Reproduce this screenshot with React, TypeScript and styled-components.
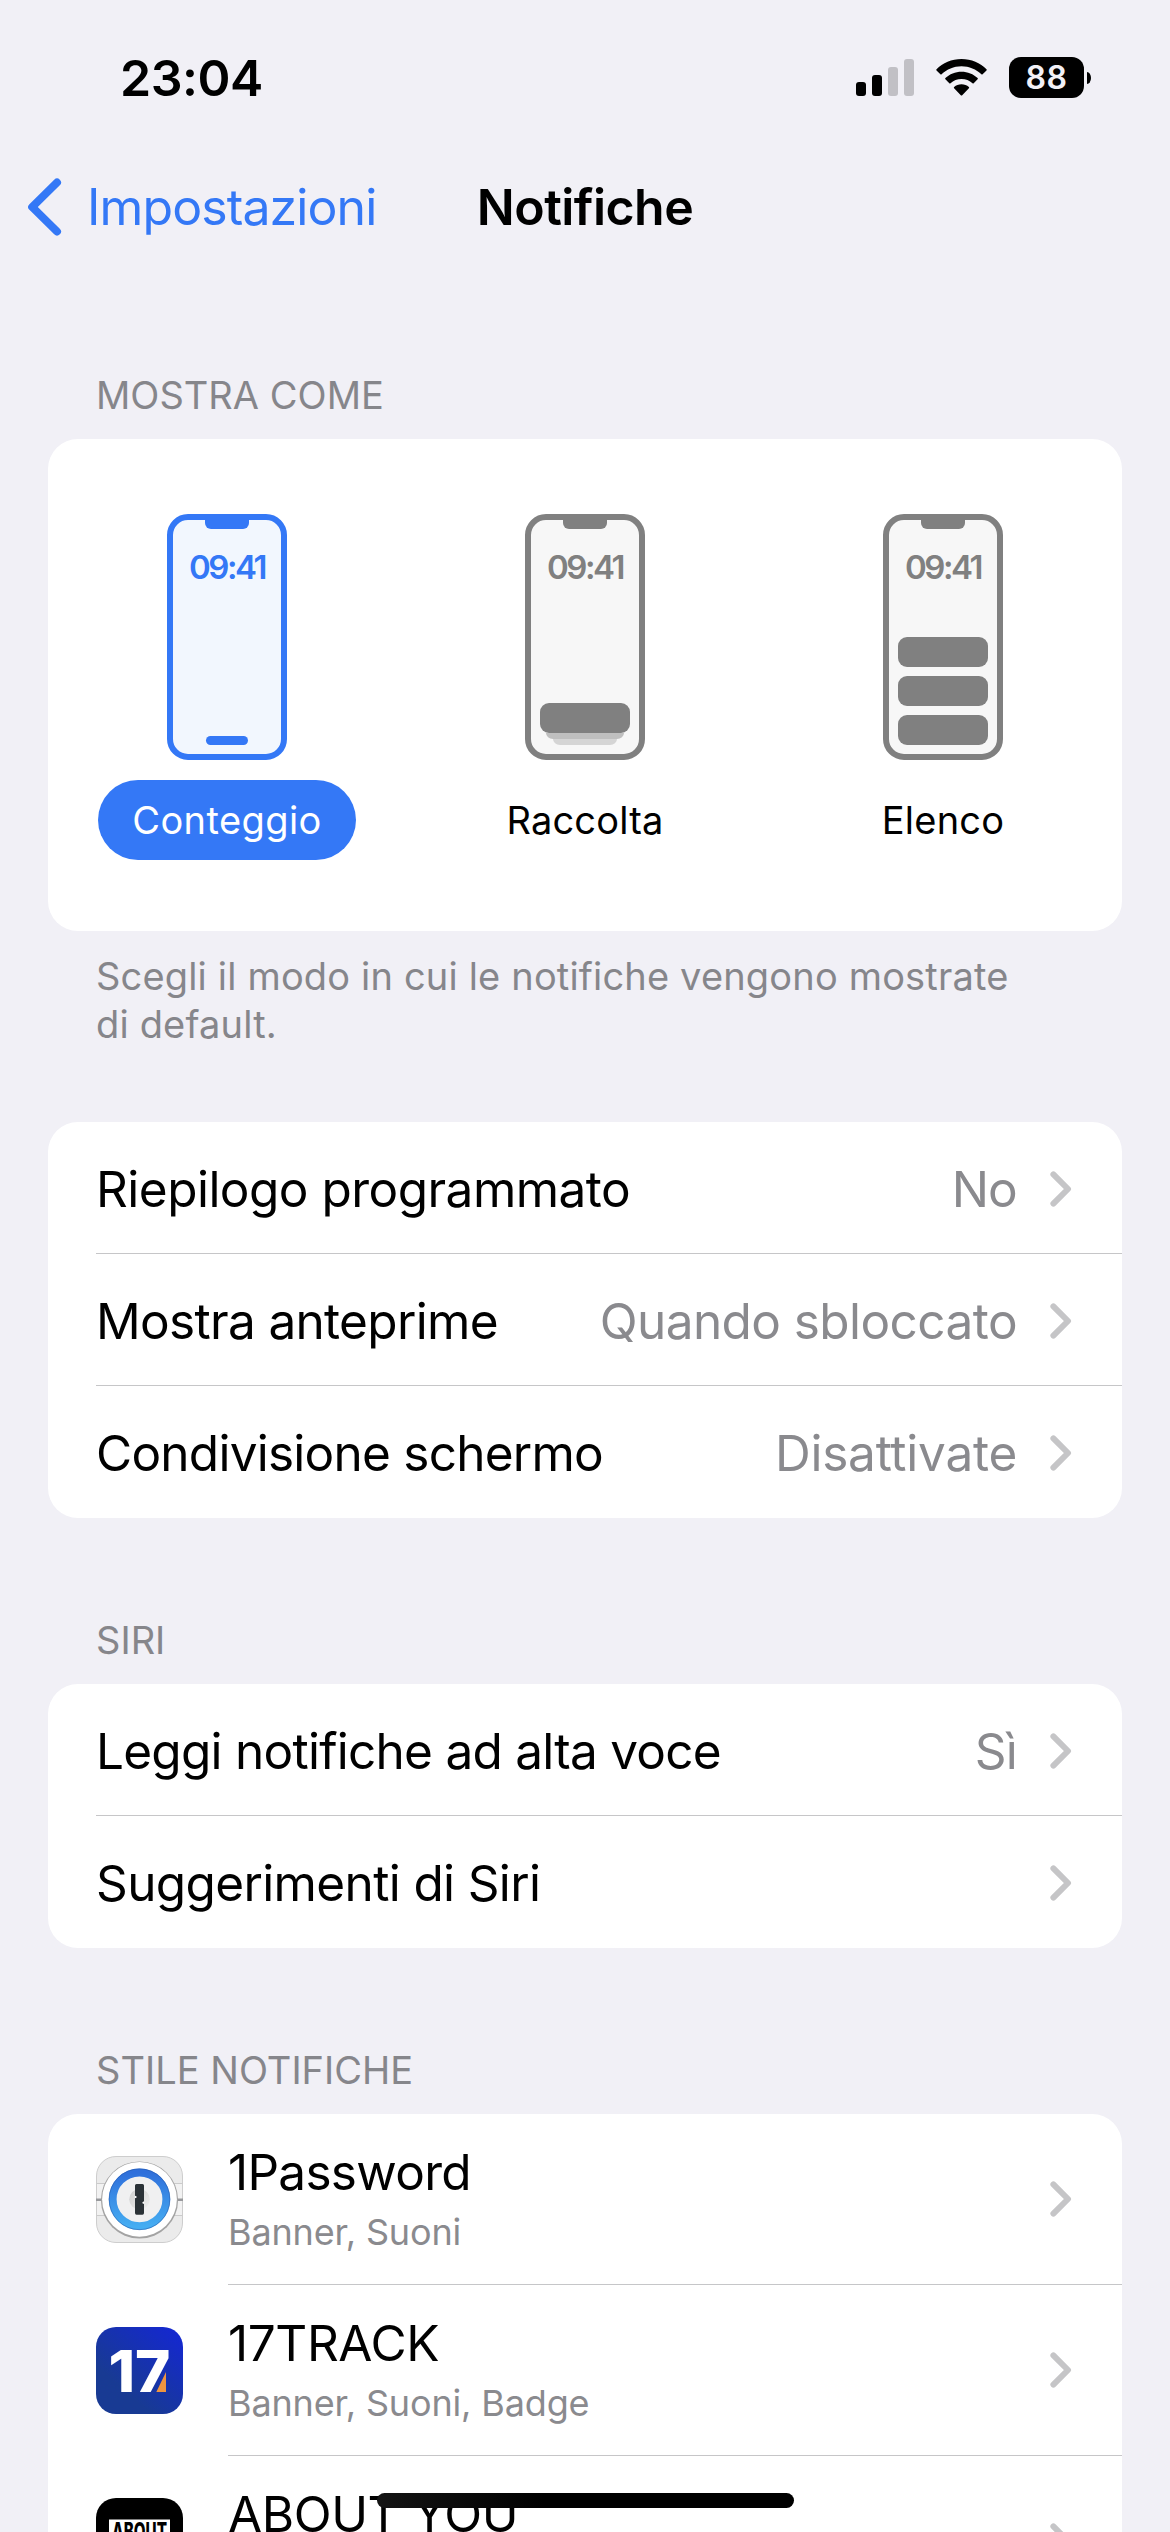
import React from "react";
import styled, { createGlobalStyle } from "styled-components";

const blue = "#3478f6";
const gray = "#808080";

const GlobalStyle = createGlobalStyle`
  *, *::before, *::after { box-sizing: border-box; }
  html, body { margin: 0; padding: 0; background: #f1f0f6; }
  body { overflow: hidden; }
`;

const Screen = styled.div`
  position: relative;
  width: 1170px;
  height: 2532px;
  overflow: hidden;
  display: flex;
  flex-direction: column;
  background: #f1f0f6;
  color: #000;
  font-family: Inter, "Liberation Sans", sans-serif;
  font-kerning: normal;
`;

const StatusBar = styled.header`
  flex: none;
  height: 141px;
  padding: 14px 79px 0 120px;
  display: flex;
  align-items: center;
  justify-content: space-between;
`;

const Clock = styled.time`
  font-size: 50px;
  font-weight: 600;
  line-height: 60px;
  letter-spacing: -0.5px;
`;

const StatusIcons = styled.div`
  display: flex;
  align-items: center;
`;

const Signal = styled.div`
  display: flex;
  align-items: flex-end;
  gap: 6px;
  height: 37px;
  margin-right: 22px;
`;

const SignalBar = styled.i<{ $height: number; $on: boolean }>`
  width: 10px;
  height: ${(p) => p.$height}px;
  border-radius: 3px;
  background: ${(p) => (p.$on ? "#000" : "#c1c0c5")};
`;

const WifiIcon = styled.svg`
  display: block;
  width: 51px;
  height: 37px;
  margin-right: 22px;
`;

const BatteryBody = styled.div`
  display: flex;
  align-items: center;
  justify-content: center;
  width: 75px;
  height: 41px;
  border-radius: 12px;
  background: #000;
  color: #f1f0f6;
  font-size: 32px;
  font-weight: 600;
  letter-spacing: 0.6px;
`;

const BatteryCap = styled.div`
  width: 4px;
  height: 12px;
  margin-left: 3px;
  border-radius: 0 4px 4px 0 / 0 6px 6px 0;
  background: #000;
`;

const NavBar = styled.nav`
  flex: none;
  height: 132px;
  padding: 0 28px;
  display: grid;
  grid-template-columns: 1fr auto 1fr;
  align-items: center;
`;

const BackLink = styled.a`
  display: flex;
  align-items: center;
  gap: 25px;
  color: ${blue};
  font-size: 50px;
  line-height: 60px;
  letter-spacing: -0.9px;
`;

const BackChevron = styled.svg`
  display: block;
  width: 34px;
  height: 58px;
`;

const NavTitle = styled.h1`
  margin: 0;
  font-size: 50px;
  font-weight: 600;
  line-height: 60px;
  letter-spacing: -0.55px;
`;

const SectionTitle = styled.h2`
  flex: none;
  margin: 98px 96px 20px;
  color: #86868b;
  font-size: 38px;
  font-weight: 400;
  line-height: 48px;
  letter-spacing: 0.02px;
`;

const Card = styled.section`
  flex: none;
  margin: 0 48px;
  border-radius: 30px;
  background: #fff;
`;

const ModeCard = styled(Card)`
  display: grid;
  grid-template-columns: repeat(3, 1fr);
  height: 492px;
  padding-top: 75px;
`;

const Mode = styled.div<{ $tint: string; $screen: string }>`
  display: flex;
  flex-direction: column;
  align-items: center;
  gap: 20px;
  --tint: ${(p) => p.$tint};
  --screen: ${(p) => p.$screen};
`;

const Phone = styled.div`
  display: flex;
  flex-direction: column;
  align-items: center;
  width: 120px;
  height: 246px;
  padding-bottom: 9px;
  border: 6px solid var(--tint);
  border-radius: 21px;
  background: var(--screen);
`;

const Notch = styled.div`
  width: 44px;
  height: 9px;
  border-radius: 0 0 6px 6px;
  background: var(--tint);
`;

const PhoneClock = styled.div`
  margin: 18px 0 auto;
  color: var(--tint);
  font-size: 33px;
  font-weight: 600;
  line-height: 40px;
  letter-spacing: -2.5px;
`;

const CountBar = styled.div`
  width: 42px;
  height: 9px;
  border-radius: 4.5px;
  background: var(--tint);
`;

const Banner = styled.div`
  width: 90px;
  height: 30px;
  border-radius: 9px;
  background: var(--tint);
`;

const BannerList = styled.div`
  display: flex;
  flex-direction: column;
  gap: 9px;
`;

const BannerStack = styled.div`
  display: flex;
  flex-direction: column;
  align-items: center;
`;

const StackEdge = styled.div<{ $width: number; $color: string }>`
  width: ${(p) => p.$width}px;
  height: 6px;
  border-radius: 0 0 7px 7px / 0 0 6px 6px;
  background: ${(p) => p.$color};
`;

const ModeLabel = styled.span<{ $selected?: boolean; $tracking: number }>`
  display: flex;
  align-items: center;
  height: 80px;
  padding: 0 34.4px;
  border-radius: 40px;
  background: ${(p) => (p.$selected ? blue : "transparent")};
  color: ${(p) => (p.$selected ? "#fff" : "#000")};
  font-size: 38px;
  letter-spacing: ${(p) => p.$tracking}px;
`;

const Footnote = styled.p`
  flex: none;
  width: 978px;
  margin: 21px 96px 74px;
  color: #86868b;
  font-size: 38px;
  line-height: 48px;
  letter-spacing: 0.17px;
`;

const RowLine = styled.div`
  display: flex;
  align-items: center;
  height: 132px;
  margin-left: 48px;
  padding: 2px 50px 0 0;
  font-size: 49.5px;
  line-height: 60px;

  &:not(:last-child) {
    border-bottom: 1px solid #c6c6c8;
  }
`;

const RowLabel = styled.span<{ $tracking: number }>`
  flex: 1;
  white-space: nowrap;
  letter-spacing: ${(p) => p.$tracking}px;
`;

const RowValue = styled.span<{ $tracking: number }>`
  margin-right: 33px;
  color: #8a8a8e;
  white-space: nowrap;
  letter-spacing: ${(p) => p.$tracking}px;
`;

const ChevronSvg = styled.svg`
  flex: none;
  display: block;
  width: 22px;
  height: 36px;
`;

const AppRow = styled.div`
  display: flex;
  height: 171px;
  padding-left: 48px;
`;

const AppIcon = styled.svg`
  flex: none;
  display: block;
  width: 87px;
  height: 87px;
  margin: 42px 45px 0 0;
`;

const AppBody = styled.div`
  flex: 1;
  display: flex;
  align-items: center;
  justify-content: space-between;
  padding-right: 50px;
  border-bottom: 1px solid #c6c6c8;
`;

const AppText = styled.div`
  display: flex;
  flex-direction: column;
  gap: 7px;
  padding-bottom: 2px;
`;

const AppName = styled.span<{ $tracking: number }>`
  font-size: 49.5px;
  line-height: 60px;
  letter-spacing: ${(p) => p.$tracking}px;
`;

const AppDetail = styled.span`
  color: #8a8a8e;
  font-size: 36px;
  line-height: 46px;
  letter-spacing: -0.15px;
`;

const HomeIndicator = styled.div`
  position: absolute;
  left: 377px;
  bottom: 24px;
  width: 417px;
  height: 15px;
  border-radius: 7.5px;
  background: linear-gradient(90deg, #141414, #000 40%);
`;

const Chevron = () => (
  <ChevronSvg viewBox="0 0 22 36">
    <path d="M3.4 3.4 L18 18 L3.4 32.6" fill="none" stroke="#c5c5c7" strokeWidth="6" strokeLinecap="round" strokeLinejoin="round" />
  </ChevronSvg>
);

const Row = ({ label, tracking, value, valueTracking = -0.8 }: { label: string; tracking: number; value?: string; valueTracking?: number }) => (
  <RowLine>
    <RowLabel $tracking={tracking}>{label}</RowLabel>
    {value && <RowValue $tracking={valueTracking}>{value}</RowValue>}
    <Chevron />
  </RowLine>
);

const OnePasswordIcon = () => (
  <AppIcon viewBox="0 0 87 87">
    <defs>
      <linearGradient id="ring" x1="0" y1="0" x2="0" y2="1">
        <stop offset="0" stopColor="#2f6fdb" />
        <stop offset="1" stopColor="#45adf2" />
      </linearGradient>
      <linearGradient id="dent" x1="0" y1="0" x2="1" y2="1">
        <stop offset="0" stopColor="#cfcfcf" />
        <stop offset="1" stopColor="#efefef" />
      </linearGradient>
    </defs>
    <rect x="0.5" y="0.5" width="86" height="86" rx="19.5" fill="#ebebeb" stroke="#cdcdcd" />
    <rect x="1" y="27" width="85" height="33" fill="#f2f2f2" />
    <path d="M0.5 27.5H86.5M0.5 59.5H86.5" stroke="#cbcbcb" />
    <path d="M0 43.7H87" stroke="#98999c" strokeWidth="2.4" />
    <circle cx="43.5" cy="44" r="38.6" fill="#a3a3a3" />
    <circle cx="43.5" cy="43.3" r="37.4" fill="#fff" />
    <circle cx="43.5" cy="43.3" r="26.8" fill="#f0f0f1" stroke="url(#ring)" strokeWidth="7.8" />
    <circle cx="43.5" cy="43.3" r="30.4" fill="none" stroke="#2559ac" strokeOpacity=".55" />
    <circle cx="43.5" cy="43.3" r="10.3" fill="url(#dent)" />
    <path d="M40.5 28H46.5Q48 28 48 29.5V45L47 46.5L48 48V57Q48 58.7 46.5 58.7H40.5Q39 58.7 39 57V42.5L40 41L39 39.5V29.5Q39 28 40.5 28Z" fill="#2b3237" />
    <circle cx="39.6" cy="41" r="1" fill="#fff" />
    <circle cx="47.4" cy="46.8" r="1" fill="#fff" />
  </AppIcon>
);

const TrackIcon = () => (
  <AppIcon viewBox="0 0 87 87">
    <defs>
      <linearGradient id="track" x1="1" y1="0" x2="0.35" y2="0.75">
        <stop offset="0" stopColor="#1426d6" />
        <stop offset="1" stopColor="#183a93" />
      </linearGradient>
    </defs>
    <rect width="87" height="87" rx="20" fill="url(#track)" />
    <text x="12.5" y="65" fill="#fff" fontFamily="Inter, sans-serif" fontSize="58" fontWeight="800" textLength="62" lengthAdjust="spacingAndGlyphs">17</text>
    <path d="M70 45V65H60.3Z" fill="#ee9540" />
  </AppIcon>
);

const AboutYouIcon = () => (
  <AppIcon viewBox="0 0 87 87">
    <rect width="87" height="87" rx="20" fill="#000" />
    <rect x="13" y="21.5" width="61" height="45" fill="#fff" />
    <text x="16" y="42" fill="#000" fontFamily="Inter, sans-serif" fontSize="24" fontWeight="800" textLength="55" lengthAdjust="spacingAndGlyphs">ABOUT</text>
  </AppIcon>
);

const AppEntry = ({ icon, name, tracking, detail }: { icon: React.ReactNode; name: string; tracking: number; detail?: string }) => (
  <AppRow>
    {icon}
    <AppBody>
      <AppText>
        <AppName $tracking={tracking}>{name}</AppName>
        <AppDetail>{detail || "\u00a0"}</AppDetail>
      </AppText>
      <Chevron />
    </AppBody>
  </AppRow>
);

export default function App() {
  return (
    <>
      <GlobalStyle />
      <Screen>
        <StatusBar>
          <Clock>23:04</Clock>
          <StatusIcons>
            <Signal>
              <SignalBar $height={14} $on />
              <SignalBar $height={21} $on />
              <SignalBar $height={29} $on={false} />
              <SignalBar $height={37} $on={false} />
            </Signal>
            <WifiIcon viewBox="0 0 51 37">
              <path d="M25.5 0C35.3 0 44.3 3.9 50.5 10.3Q51 10.9 50.5 11.4L46.6 15.3Q46 15.9 45.4 15.3C40.2 10.3 33.2 7.3 25.5 7.3S10.8 10.3 5.6 15.3Q5 15.9 4.4 15.3L0.5 11.4Q0 10.9 0.5 10.3C6.7 3.9 15.7 0 25.5 0Z" />
              <path d="M25.5 12.7C31.7 12.7 37.4 15.1 41.6 19.1Q42.2 19.7 41.6 20.3L37.7 24.2Q37.1 24.8 36.5 24.2C33.6 21.6 29.7 20 25.5 20S17.4 21.6 14.5 24.2Q13.9 24.8 13.3 24.2L9.4 20.3Q8.8 19.7 9.4 19.1C13.6 15.1 19.3 12.7 25.5 12.7Z" />
              <path d="M25.5 25.3C28.3 25.3 30.9 26.3 32.9 28Q33.5 28.6 32.9 29.2L26.2 36.2Q25.5 36.9 24.8 36.2L18.1 29.2Q17.5 28.6 18.1 28C20.1 26.3 22.7 25.3 25.5 25.3Z" />
            </WifiIcon>
            <BatteryBody>88</BatteryBody>
            <BatteryCap />
          </StatusIcons>
        </StatusBar>

        <NavBar>
          <BackLink>
            <BackChevron viewBox="0 0 34 58">
              <path d="M29 4.5L4.2 29L29 53.5" fill="none" stroke={blue} strokeWidth="8" strokeLinecap="round" strokeLinejoin="round" />
            </BackChevron>
            Impostazioni
          </BackLink>
          <NavTitle>Notifiche</NavTitle>
        </NavBar>

        <SectionTitle>MOSTRA COME</SectionTitle>
        <ModeCard>
          <Mode $tint={blue} $screen="#f2f7fe">
            <Phone>
              <Notch />
              <PhoneClock>09:41</PhoneClock>
              <CountBar />
            </Phone>
            <ModeLabel $selected $tracking={0.4}>Conteggio</ModeLabel>
          </Mode>
          <Mode $tint={gray} $screen="#f7f7f7">
            <Phone>
              <Notch />
              <PhoneClock>09:41</PhoneClock>
              <BannerStack>
                <Banner />
                <StackEdge $width={78} $color="#bfbfbf" />
                <StackEdge $width={64} $color="#d5d5d5" />
              </BannerStack>
            </Phone>
            <ModeLabel $tracking={0.2}>Raccolta</ModeLabel>
          </Mode>
          <Mode $tint={gray} $screen="#f7f7f7">
            <Phone>
              <Notch />
              <PhoneClock>09:41</PhoneClock>
              <BannerList>
                <Banner />
                <Banner />
                <Banner />
              </BannerList>
            </Phone>
            <ModeLabel $tracking={0.2}>Elenco</ModeLabel>
          </Mode>
        </ModeCard>
        <Footnote>
          Scegli il modo in cui le notifiche vengono mostrate
          <br />
          di default.
        </Footnote>

        <Card>
          <Row label="Riepilogo programmato" tracking={-0.52} value="No" />
          <Row label="Mostra anteprime" tracking={-0.67} value="Quando sbloccato" valueTracking={-0.57} />
          <Row label="Condivisione schermo" tracking={-0.75} value="Disattivate" valueTracking={-0.25} />
        </Card>

        <SectionTitle>SIRI</SectionTitle>
        <Card>
          <Row label="Leggi notifiche ad alta voce" tracking={-0.74} value="Sì" />
          <Row label="Suggerimenti di Siri" tracking={-0.63} />
        </Card>

        <SectionTitle>STILE NOTIFICHE</SectionTitle>
        <Card>
          <AppEntry icon={<OnePasswordIcon />} name="1Password" tracking={-0.7} detail="Banner, Suoni" />
          <AppEntry icon={<TrackIcon />} name="17TRACK" tracking={-0.4} detail="Banner, Suoni, Badge" />
          <AppEntry icon={<AboutYouIcon />} name="ABOUT YOU" tracking={-0.4} />
        </Card>
        <HomeIndicator />
      </Screen>
    </>
  );
}
